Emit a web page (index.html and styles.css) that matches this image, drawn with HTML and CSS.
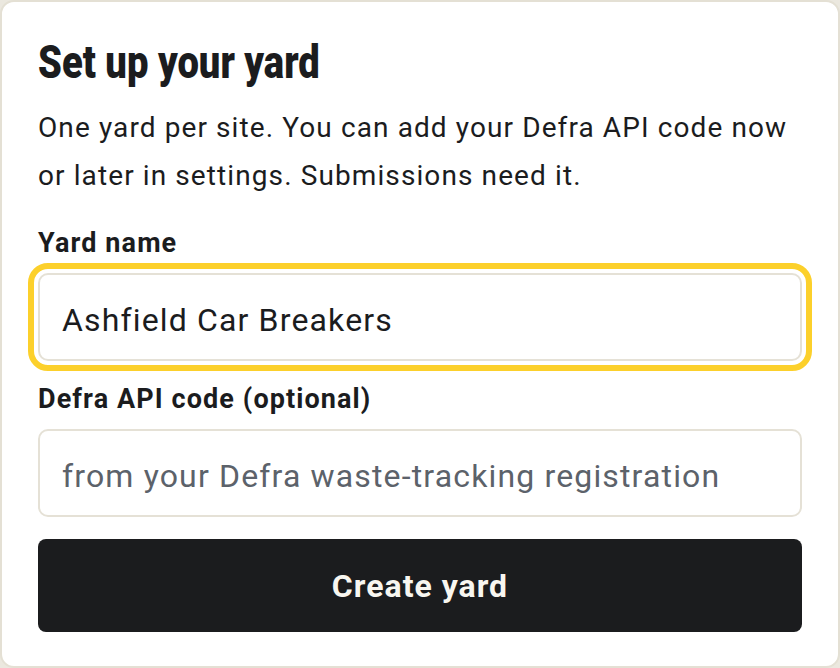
FILE: index.html
```html
<!DOCTYPE html>
<html lang="en">
<head>
<meta charset="utf-8">
<title>Set up your yard</title>
<link rel="stylesheet" href="styles.css">
</head>
<body>
<main class="card">
  <h1 class="title">Set up your yard</h1>
  <p class="lead">One yard per site. You can add your Defra API code now or later in settings. Submissions need it.</p>
  <form class="form">
    <label class="field">
      <span class="label">Yard name</span>
      <input class="input input--focus" type="text" value="Ashfield Car Breakers">
    </label>
    <label class="field">
      <span class="label">Defra API code (optional)</span>
      <input class="input" type="text" placeholder="from your Defra waste-tracking registration">
    </label>
    <button class="btn" type="button">Create yard</button>
  </form>
</main>
</body>
</html>
```

FILE: styles.css
```css
* { box-sizing: border-box; }

html, body {
  margin: 0;
  padding: 0;
  background: #ebe8df;
}

body {
  font-family: Roboto, "Noto Sans", sans-serif;
  color: #1b1c1e;
}

.card {
  width: 840px;
  height: 668px;
  background: #ffffff;
  border: 2px solid #e4e0d4;
  border-radius: 14px;
  padding: 34px 36px;
  display: flex;
  flex-direction: column;
}

.title {
  margin: 0;
  font-family: Roboto, "Noto Sans", sans-serif;
  font-weight: 900;
  font-size: 46px;
  line-height: 52px;
  letter-spacing: 0;
  color: #1b1c1e;
  transform: scaleX(0.83);
  transform-origin: left center;
  white-space: nowrap;
}

.lead {
  margin: 16px 0 0;
  font-size: 28px;
  line-height: 48px;
  letter-spacing: 1.1px;
  color: #1b1c1e;
}

.form {
  margin-top: 27px;
  display: flex;
  flex-direction: column;
  gap: 22px;
}

.field {
  display: flex;
  flex-direction: column;
  gap: 14px;
}

.label {
  font-size: 27px;
  line-height: 32px;
  font-weight: 700;
  letter-spacing: 1.1px;
  color: #1b1c1e;
}

.input {
  height: 88px;
  width: 100%;
  border: 2px solid #e5e1d6;
  border-radius: 10px;
  padding: 5px 22px 0;
  font-family: Roboto, "Noto Sans", sans-serif;
  font-size: 32px;
  letter-spacing: 1.15px;
  color: #1b1c1e;
  background: #ffffff;
  outline: none;
}

.input::placeholder {
  color: #5c626a;
  opacity: 1;
}

.input--focus {
  outline: 6px solid #fcd02b;
  outline-offset: 4px;
}

.btn {
  height: 93px;
  width: 100%;
  border: 0;
  border-radius: 8px;
  background: #1b1c1e;
  color: #f8f6f0;
  font-family: Roboto, "Noto Sans", sans-serif;
  font-size: 32px;
  font-weight: 700;
  letter-spacing: 1px;
  cursor: pointer;
}
```
